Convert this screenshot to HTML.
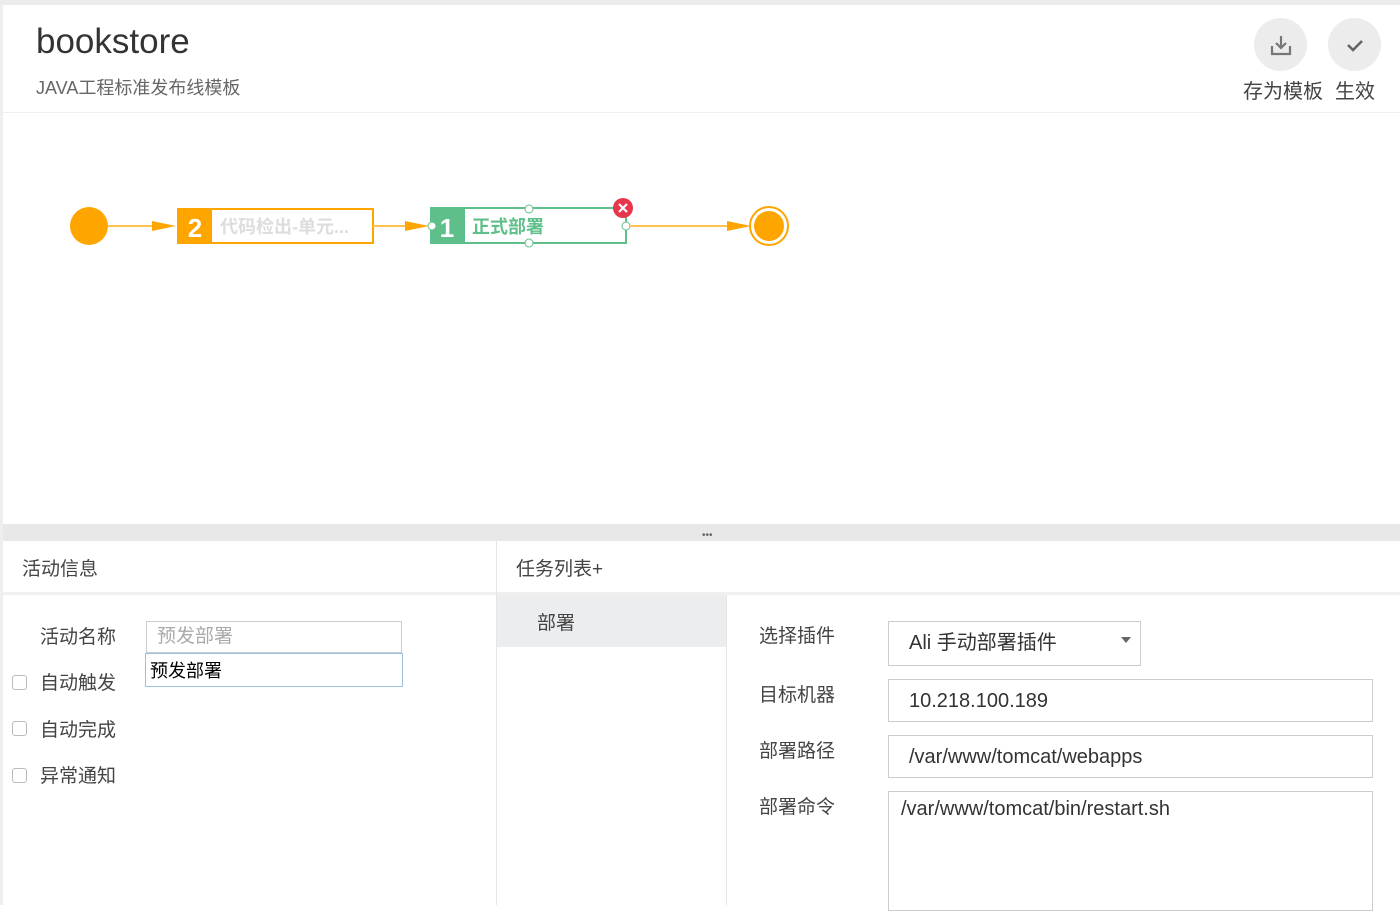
<!DOCTYPE html>
<html><head><meta charset="utf-8"><style>
*{box-sizing:border-box;margin:0;padding:0}
body{width:1400px;height:905px;overflow:hidden;background:#fff;font-family:"Liberation Sans","Noto Sans CJK SC",sans-serif;color:#333;position:relative}
.a{position:absolute}
.t{font-size:19px;color:#444}
.inp{position:absolute;border:1px solid #ccc;background:#fff;font-size:20px;color:#333;padding-left:20px}
.cb{position:absolute;left:12px;width:15px;height:15px;border:1px solid #bbb;border-radius:3px}
</style></head><body>
<div class="a" style="left:0;top:0;width:1400px;height:5px;background:#ececec"></div>
<div class="a" style="left:0;top:5px;width:3px;height:900px;background:#eee"></div>
<div class="a" style="left:36px;top:22px;font-size:35px;color:#333">bookstore</div>
<div class="a" style="left:36px;top:74px;font-size:18px;color:#666">JAVA工程标准发布线模板</div>
<div class="a" style="left:1254px;top:18px;width:53px;height:53px;border-radius:50%;background:#ececec"></div>
<svg class="a" style="left:1268px;top:32px" width="26" height="26" viewBox="0 0 26 26"><path d="M13 4v12M8 11l5 5 5-5M4 14v8h18v-8" stroke="#777" stroke-width="2.2" fill="none"/></svg>
<div class="a" style="left:1328px;top:18px;width:53px;height:53px;border-radius:50%;background:#ececec"></div>
<svg class="a" style="left:1344px;top:34px" width="22" height="22" viewBox="0 0 22 22"><path d="M4 11l5 5 9-9" stroke="#666" stroke-width="2.6" fill="none"/></svg>
<div class="a t" style="left:1243px;top:75px;font-size:20px">存为模板</div>
<div class="a t" style="left:1335px;top:75px;font-size:20px">生效</div>
<div class="a" style="left:3px;top:112px;width:1397px;height:1px;background:#eee"></div>
<svg class="a" style="left:0;top:180px" width="800" height="90">
<circle cx="89" cy="46" r="19" fill="#ffa500"/>
<line x1="108" y1="46" x2="160" y2="46" stroke="#ffc34d" stroke-width="2"/>
<path d="M152 41l24 5-24 5z" fill="#ffa500"/>
<rect x="178" y="29" width="195" height="34" fill="#fff" stroke="#ffa500" stroke-width="2"/>
<rect x="178" y="29" width="34" height="34" fill="#ffa500"/>
<text x="195" y="57" font-size="26" font-weight="bold" fill="#fff" text-anchor="middle" font-family="Liberation Sans">2</text>
<text x="220" y="53" font-size="18" font-weight="bold" fill="#ddd" font-family="Liberation Sans,Noto Sans CJK SC">代码检出-单元...</text>
<line x1="373" y1="46" x2="415" y2="46" stroke="#ffc34d" stroke-width="2"/>
<path d="M405 41l24 5-24 5z" fill="#ffa500"/>
<rect x="431" y="28" width="195" height="35" fill="#fff" stroke="#5fbf8a" stroke-width="2"/>
<rect x="431" y="28" width="34" height="35" fill="#5fbf8a"/>
<text x="447" y="57" font-size="26" font-weight="bold" fill="#fff" text-anchor="middle" font-family="Liberation Sans">1</text>
<text x="472" y="53" font-size="18" font-weight="bold" fill="#5fbf8a" font-family="Liberation Sans,Noto Sans CJK SC">正式部署</text>
<circle cx="432" cy="46" r="4" fill="#fff" stroke="#5fbf8a"/>
<circle cx="529" cy="29" r="4" fill="#fff" stroke="#5fbf8a"/>
<circle cx="529" cy="63" r="4" fill="#fff" stroke="#5fbf8a"/>
<circle cx="626" cy="46" r="4" fill="#fff" stroke="#5fbf8a"/>
<circle cx="623" cy="28" r="10" fill="#e8364d"/>
<path d="M619 24l8 8M627 24l-8 8" stroke="#fff" stroke-width="2.2"/>
<line x1="630" y1="46" x2="735" y2="46" stroke="#ffc34d" stroke-width="2"/>
<path d="M727 41l24 5-24 5z" fill="#ffa500"/>
<circle cx="769" cy="46" r="19" fill="#fff" stroke="#ffa500" stroke-width="2"/>
<circle cx="769" cy="46" r="15" fill="#ffa500"/>
</svg>
<div class="a" style="left:3px;top:524px;width:1397px;height:17px;background:#e8e8e8"></div>
<div class="a" style="left:702px;top:530px;font-size:10px;color:#666">•••</div>
<div class="a" style="left:3px;top:592px;width:1397px;height:3px;background:#f0f0f0"></div>
<div class="a" style="left:496px;top:541px;width:1px;height:364px;background:#e6e6e6"></div>
<div class="a" style="left:726px;top:595px;width:1px;height:310px;background:#e6e6e6"></div>
<div class="a t" style="left:22px;top:554px">活动信息</div>
<div class="a t" style="left:516px;top:554px">任务列表+</div>
<div class="a" style="left:497px;top:595px;width:229px;height:52px;background:#ebedef"></div>
<div class="a t" style="left:537px;top:608px">部署</div>
<div class="a t" style="left:40px;top:622px">活动名称</div>
<div class="inp" style="left:146px;top:621px;width:256px;height:32px;padding-left:10px;line-height:30px;color:#aaa;font-size:19px">预发部署</div>
<div class="inp" style="left:145px;top:653px;width:258px;height:34px;border-color:#9cc0e0;padding-left:4px;line-height:34px;color:#000;font-size:18px">预发部署</div>
<div class="cb" style="top:675px"></div><div class="a t" style="left:40px;top:668px">自动触发</div>
<div class="cb" style="top:721px"></div><div class="a t" style="left:40px;top:715px">自动完成</div>
<div class="cb" style="top:768px"></div><div class="a t" style="left:40px;top:761px">异常通知</div>
<div class="a t" style="left:759px;top:621px">选择插件</div>
<div class="a t" style="left:759px;top:680px">目标机器</div>
<div class="a t" style="left:759px;top:736px">部署路径</div>
<div class="a t" style="left:759px;top:792px">部署命令</div>
<div class="inp" style="left:888px;top:621px;width:253px;height:45px;line-height:42px">Ali 手动部署插件</div>
<div class="a" style="left:1121px;top:637px;border:5px solid transparent;border-top:6px solid #666"></div>
<div class="inp" style="left:888px;top:679px;width:485px;height:43px;line-height:43px">10.218.100.189</div>
<div class="inp" style="left:888px;top:735px;width:485px;height:43px;line-height:43px">/var/www/tomcat/webapps</div>
<div class="inp" style="left:888px;top:791px;width:485px;height:120px;padding:6px 12px">/var/www/tomcat/bin/restart.sh</div>
</body></html>
